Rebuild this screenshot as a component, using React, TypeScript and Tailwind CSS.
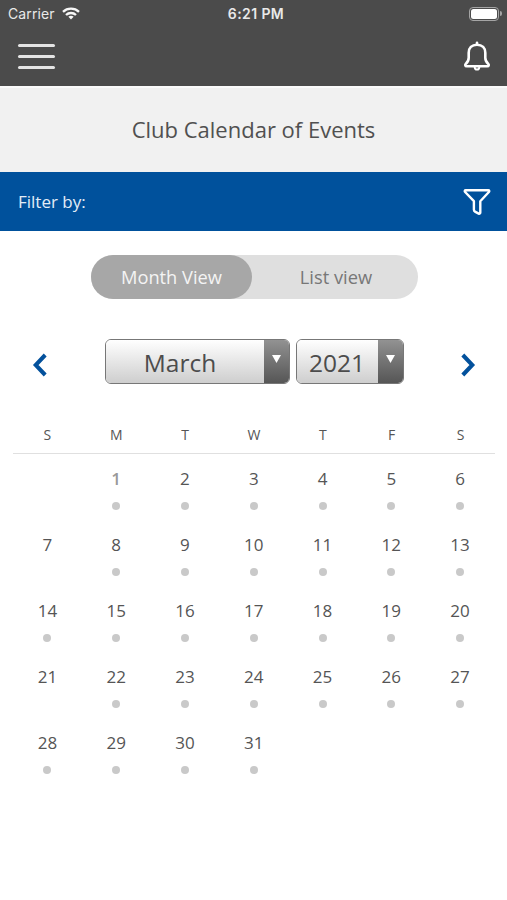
const weekdays = ["S", "M", "T", "W", "T", "F", "S"];
const quietDays = [7, 21];
const cells: (number | null)[] = [null, ...Array.from({ length: 31 }, (_, i) => i + 1)];

function StatusBar() {
  return (
    <div className="flex h-[27px] items-center justify-between pl-2 pr-[5px] font-['Inter',sans-serif] text-[#e9e9e9]">
      <div className="flex w-[150px] items-center gap-[7px]">
        <span className="text-[14px] leading-[27px] tracking-[0.1px]">Carrier</span>
        <svg width="18" height="13" viewBox="0 0 18 13" className="mt-[-1px]" fill="none" stroke="#f7f7f7" strokeWidth="2.3">
          <path d="M1 4.8C5.4.6 12.6.6 17 4.8" />
          <path d="M4 8C6.8 5.3 11.2 5.3 14 8" />
          <path d="M9 12.4 6.4 9.8c1.4-1.3 3.8-1.3 5.2 0Z" fill="#f7f7f7" stroke="none" />
        </svg>
      </div>
      <span className="pl-[2px] text-[14px] font-semibold leading-[27px] tracking-[0.4px]">6:21 PM</span>
      <div className="flex w-[150px] items-center justify-end gap-px">
        <div className="h-[14px] w-[30px] rounded-[4px] border border-[#a5a5a5] p-px">
          <div className="h-full rounded-[2.5px] bg-white" />
        </div>
        <div className="h-[5px] w-[2px] rounded-r-full bg-[#a5a5a5]" />
      </div>
    </div>
  );
}

function NavBar() {
  return (
    <div className="flex h-[59px] items-center justify-between pl-[18px] pr-4">
      <button aria-label="Menu" className="mt-[-1px] flex w-[37px] flex-col gap-2">
        <span className="h-[3px] rounded-full bg-[#e4e4e4]" />
        <span className="h-[3px] rounded-full bg-[#e4e4e4]" />
        <span className="h-[3px] rounded-full bg-[#e4e4e4]" />
      </button>
      <svg width="28" height="32" viewBox="0 0 28 32" className="mt-[-1px]" fill="none" stroke="#fff" strokeWidth="2.6" strokeLinecap="round" strokeLinejoin="round">
        <path d="M14 2.7v1.6" />
        <path d="M14 4.7c-5.3 0-8.3 3.4-8.3 8v5c0 2.8-.8 4.2-2.800 6-1.1 1.1-.8 2.6.8 2.6h20.600c1.6 0 1.9-1.5.8-2.600-2-1.800-2.800-3.200-2.800-6v-5c0-4.600-3-8-8.300-8Z" />
        <path d="M11.7 27.2c.2 3.2 4.4 3.2 4.6 0" strokeWidth="2" />
      </svg>
    </div>
  );
}

function Dropdown({ value, className, textClass }: { value: string; className: string; textClass: string }) {
  return (
    <button className={"flex h-[45px] overflow-hidden rounded-[6px] border-[1.5px] border-[#777] text-[#4c4c4c] " + className}>
      <span className={"flex h-full flex-1 items-center justify-center bg-linear-to-b from-white to-[#cecece] pt-[4px] text-[24.5px] " + textClass}>{value}</span>
      <span className="flex h-full w-[25px] justify-center bg-linear-to-b from-[#929292] to-[#565656] pt-[15px]">
        <svg width="9" height="8" viewBox="0 0 9 8" fill="#fff">
          <path d="M0 0h9L4.5 8Z" />
        </svg>
      </span>
    </button>
  );
}

function Chevron({ d, label }: { d: string; label: string }) {
  return (
    <button aria-label={label} className="pt-[6px]">
      <svg width="16" height="26" viewBox="0 0 16 26" fill="none" stroke="#03519c" strokeWidth="4">
        <path d={d} />
      </svg>
    </button>
  );
}

export default function App() {
  return (
    <div className="h-[900px] w-[507px] overflow-hidden bg-white font-['Open_Sans',sans-serif] text-[#555]">
      <header className="h-[86px] bg-[#4b4b4b]">
        <StatusBar />
        <NavBar />
      </header>
      <div className="flex h-[86px] items-center justify-center border-t-2 border-[#fafafa] bg-[#f1f1f1] pb-[2px] text-[22px] text-[#505050]">
        <h1>Club Calendar of Events</h1>
      </div>
      <div className="flex h-[59px] items-center justify-between bg-[#00519c] pl-[18px] pr-4 text-[17px] text-[#e3edf7]">
        <span>Filter by:</span>
        <svg width="28" height="28" viewBox="0 0 28 28" fill="none" stroke="#fff" strokeWidth="2.4" strokeLinejoin="round">
          <path d="M2.7 2.2h22.6c1 0 1.3 1 .6 1.8L17.3 13.2v11.3c0 1-.8 1.5-1.6 1.1l-3.7-2c-.8-.4-1.1-1-1.1-1.8V13.2L2.1 4c-.7-.8-.4-1.8.6-1.800Z" />
        </svg>
      </div>
      <main>
        <div className="ml-[91px] mt-6 flex h-11 w-[327px] rounded-full bg-[#dfdfdf]">
          <button className="w-[161px] rounded-full bg-[#a7a7a7] text-[18.3px] text-[#f4f4f4]">Month View</button>
          <button className="flex-1 pl-[2px] text-[18.3px] text-[#777]">List view</button>
        </div>
        <div className="mt-10 flex h-[45px] items-center justify-between pl-8 pr-[31px]">
          <Chevron label="Previous month" d="M13.2 3 3.7 13 13.2 23" />
          <div className="flex gap-[6px]">
            <Dropdown value="March" className="w-[185px]" textClass="pr-[9px]" />
            <Dropdown value="2021" className="w-[108px]" textClass="" />
          </div>
          <Chevron label="Next month" d="M2.8 3 12.3 13 2.8 23" />
        </div>
        <div className="ml-[13px] mt-[30px] w-[482px]">
          <div className="grid h-[40px] grid-cols-7 border-b border-[#e0e0e0] text-center text-[14px] leading-[41px]">
            {weekdays.map((day, i) => (
              <span key={i}>{day}</span>
            ))}
          </div>
          <div className="grid grid-cols-7 pr-[0.5px] pt-[11px]">
            {cells.map((day, i) => (
              <div key={i} className="flex h-[66px] flex-col items-center">
                {day && <span className={"h-7 text-[17px] leading-7 " + (day === 1 ? "font-semibold text-[#999]" : "")}>{day}</span>}
                {day && !quietDays.includes(day) && <span className="mt-[9px] size-2 rounded-full bg-[#c9c9c9]" />}
              </div>
            ))}
          </div>
        </div>
      </main>
    </div>
  );
}
